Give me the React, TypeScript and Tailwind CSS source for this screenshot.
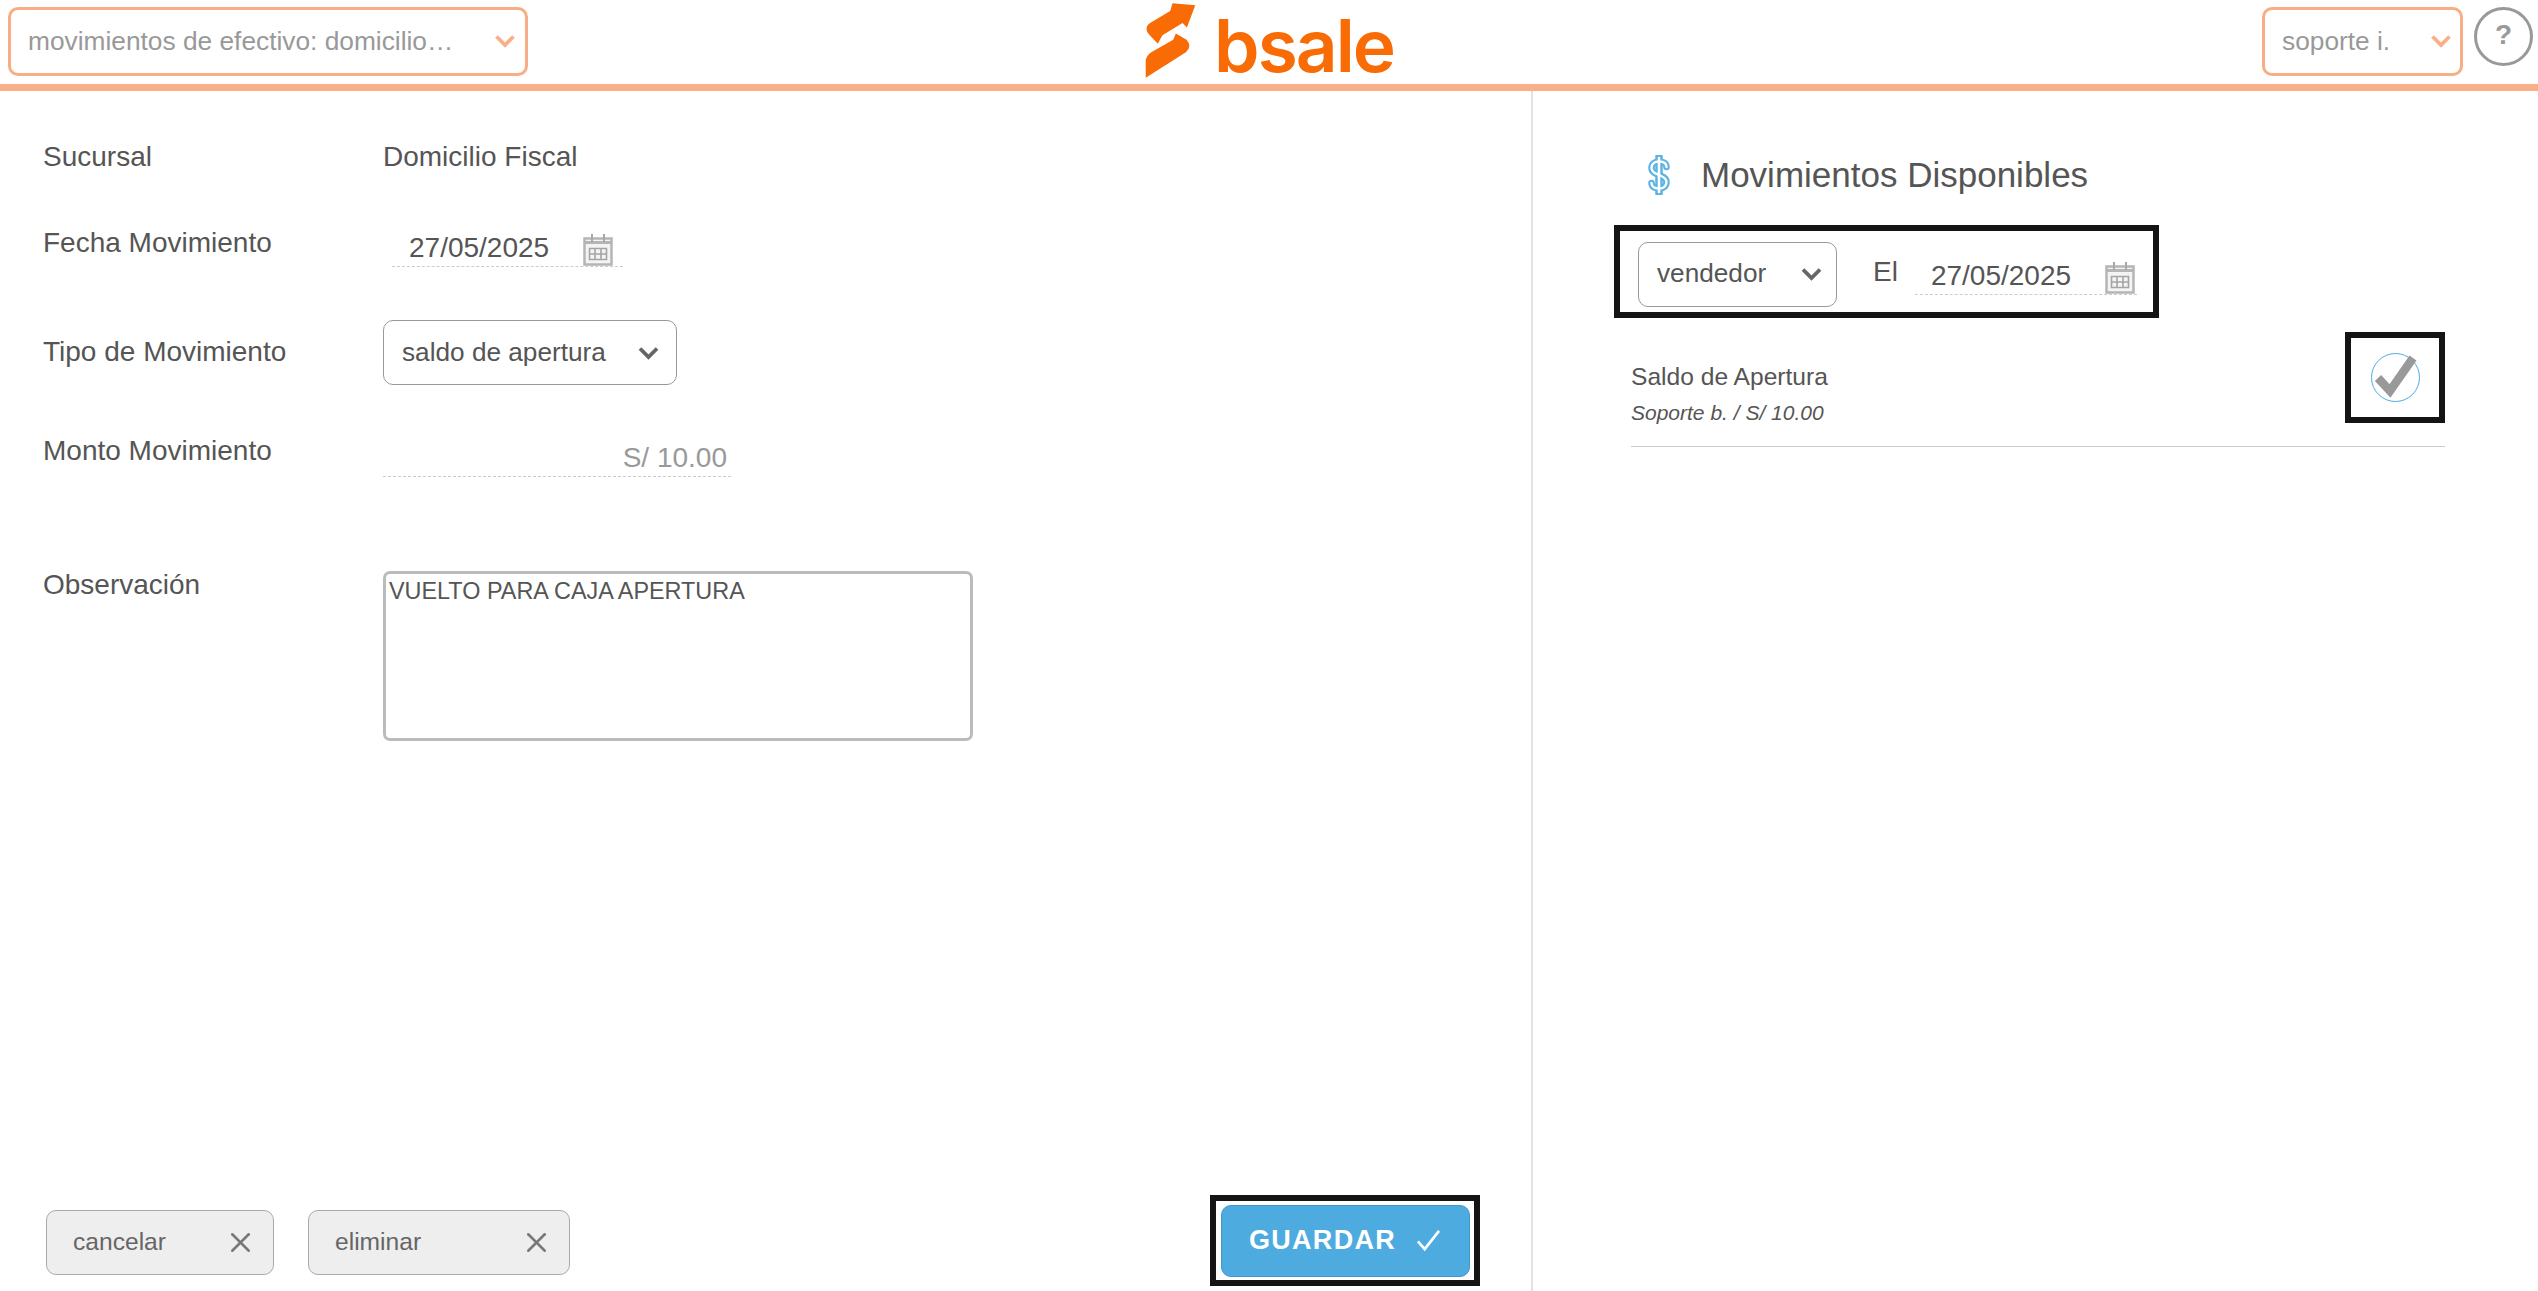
import { X } from "lucide-react"

const Chevron = ({ color = "#666", className = "" }: { color?: string; className?: string }) => (
  <svg viewBox="0 0 20 14" className={className} fill="none">
    <path d="M1.5 2.5 L10 11 L18.5 2.5" stroke={color} strokeWidth="3.8" />
  </svg>
)

const CalendarIcon = ({ className = "" }: { className?: string }) => (
  <svg viewBox="0 0 30 33" className={className} fill="none" stroke="#b5b5b5">
    <rect x="1.5" y="5.5" width="27" height="26" strokeWidth="2.5" fill="#f4f4f4" />
    <path d="M1.5 9.5 H28.5" strokeWidth="3" />
    <path d="M9 1 V9 M21 1 V9" strokeWidth="2" stroke="#a8a8a8" />
    <path d="M6.5 15.5 H23.5 V26.5 H6.5 Z M6.5 21 H23.5 M12 15.5 V26.5 M18 15.5 V26.5" strokeWidth="1.6" stroke="#a5a5a5" />
  </svg>
)

const DOLLAR_S =
  "M18.5 12 C18.5 8 15 6.5 11 6.5 C6.5 6.5 3.5 9 3.5 13 C3.5 17 7 18.5 11 20 C15 21.5 18.5 23 18.5 27 C18.5 31 15.5 33.5 11 33.5 C7 33.5 3.5 32 3.5 28"

const DollarIcon = () => (
  <svg viewBox="0 0 22 40" className="w-[24px] h-[40px] shrink-0" fill="none">
    <path d="M11 1.5 V38.5" stroke="#5cb2e3" strokeWidth="7.5" strokeLinecap="round" />
    <path d={DOLLAR_S} stroke="#5cb2e3" strokeWidth="6.5" strokeLinecap="round" />
    <path d="M11 3 V37" stroke="#ffffff" strokeWidth="2.6" strokeLinecap="round" />
    <path d={DOLLAR_S} stroke="#ffffff" strokeWidth="2.4" strokeLinecap="round" />
  </svg>
)

const LogoMark = () => (
  <svg viewBox="140 5 155 230" className="w-[52px] h-[77px] shrink-0" fill="#f96b04">
    <path d="M155 68 L215 32 L222 9 L290 15 L265 81 L252 68 L192 104 L178 130 L152 102 Q135 82 155 68 Z" />
    <path d="M232 99 L264 118 Q282 138 262 155 L142 231 L142 178 Q146 162 160 154 L224 118 Z" />
  </svg>
)

function TopSelect({ label, className }: { label: string; className: string }) {
  return (
    <div className={`h-[69px] flex items-center justify-between border-[3px] border-[#f8ae85] rounded-[10px] bg-white ${className}`}>
      <span className="text-[26.3px] text-[#999] whitespace-nowrap">{label}</span>
      <Chevron color="#f9b088" className="w-[20px] h-[14px] mt-[-2px]" />
    </div>
  )
}

function FormSelect({ label, className }: { label: string; className: string }) {
  return (
    <div className={`h-[65px] flex items-center justify-between border border-[#999] rounded-[10px] bg-white ${className}`}>
      <span className="text-[26.2px] text-[#555] whitespace-nowrap">{label}</span>
      <Chevron className="w-[21px] h-[14px]" />
    </div>
  )
}

function DateField({ className }: { className: string }) {
  return (
    <div className={`h-[48px] flex items-end justify-between border-b border-dashed border-[#ccc] ${className}`}>
      <span className="text-[28px] leading-[36px] text-[#555]">27/05/2025</span>
      <CalendarIcon className="w-[30px] h-[33px]" />
    </div>
  )
}

function ActionButton({ label, className }: { label: string; className: string }) {
  return (
    <div className={`h-[65px] mb-[11px] flex items-center justify-between bg-[#eee] border-[1.5px] border-[#aaa] rounded-[10px] pl-[26px] pr-[16px] ${className}`}>
      <span className="text-[24.6px] text-[#666]">{label}</span>
      <X className="w-[33px] h-[33px] text-[#777]" strokeWidth={1.8} />
    </div>
  )
}

export default function App() {
  return (
    <div className="h-screen w-full flex flex-col overflow-hidden bg-white font-['Liberation_Sans',Arial,sans-serif]">
      {/* Top bar */}
      <header className="h-[91px] shrink-0 border-b-[7px] border-[#f9b088] grid grid-cols-[1fr_auto_1fr] items-start pt-[7px]">
        <TopSelect label="movimientos de efectivo: domicilio…" className="w-[520px] ml-[8px] pl-[17px] pr-[10px]" />
        <div className="flex items-end gap-[17px] mt-[-5px] ml-[1px]">
          <LogoMark />
          <span className="font-['Inter',sans-serif] font-semibold text-[73px] leading-[73px] tracking-[-2px] text-[#f96b04] mb-[-3px]">bsale</span>
        </div>
        <div className="flex justify-end gap-[11px] pr-[5px]">
          <TopSelect label="soporte i." className="w-[201px] pl-[17px] pr-[9px]" />
          <div className="w-[59px] h-[59px] rounded-full border-[3px] border-[#999] flex items-center justify-center text-[#999] text-[28px] font-bold pb-[4px]">?</div>
        </div>
      </header>

      <div className="flex flex-1 min-h-0">
        {/* Left form */}
        <section className="w-[1533px] shrink-0 flex flex-col pl-[43px] border-r-2 border-[#e2e2e2] text-[#555] text-[28px]">
          <div className="mt-[40px] h-[52px] flex items-center">
            <label className="w-[340px]">Sucursal</label>
            <span>Domicilio Fiscal</span>
          </div>
          <div className="mt-[34px] h-[52px] flex items-start">
            <label className="w-[340px] leading-[52px]">Fecha Movimiento</label>
            <DateField className="w-[231px] ml-[9px] mt-[2px] pl-[17px] pr-[10px]" />
          </div>
          <div className="mt-[51px] h-[65px] flex items-center">
            <label className="w-[340px] mt-[-2px]">Tipo de Movimiento</label>
            <FormSelect label="saldo de apertura" className="w-[294px] pl-[18px] pr-[17px]" />
          </div>
          <div className="mt-[40px] h-[52px] flex items-center">
            <label className="w-[340px]">Monto Movimiento</label>
            <div className="w-[348px] h-[52px] flex items-end justify-end border-b border-dashed border-[#ccc] pr-[4px] text-[28px] leading-[36px] text-[#999]">S/ 10.00</div>
          </div>
          <div className="mt-[94px] flex items-start">
            <label className="w-[340px] mt-[-7px]">Observación</label>
            <div className="w-[590px] h-[170px] border-[3px] border-[#bbb] rounded-[7px] px-[3px] py-[2px] text-[23.4px] leading-[30px] text-[#555]">VUELTO PARA CAJA APERTURA</div>
          </div>

          <div className="mt-auto flex items-end pb-[5px]">
            <ActionButton label="cancelar" className="w-[228px] ml-[3px]" />
            <ActionButton label="eliminar" className="w-[262px] ml-[34px]" />
            <div className="ml-auto mr-[51px] w-[270px] h-[91px] border-[6px] border-[#141414] flex items-center justify-center">
              <div className="w-[249px] h-[72px] bg-[#4eabe0] border border-[#3f97cc] rounded-[10px] flex items-center justify-center gap-[20px] text-white">
                <span className="text-[27px] font-bold tracking-[1.3px]">GUARDAR</span>
                <svg viewBox="0 0 26 24" className="w-[25px] h-[23px]" fill="none">
                  <path d="M2 13 L9 21 L24 2" stroke="#ffffff" strokeWidth="2.8" />
                </svg>
              </div>
            </div>
          </div>
        </section>

        {/* Right list */}
        <section className="flex-1 text-[#555]">
          <div className="mt-[58px] h-[52px] ml-[114px] flex items-center gap-[30px]">
            <DollarIcon />
            <h2 className="text-[35px] font-normal">Movimientos Disponibles</h2>
          </div>
          <div className="mt-[24px] ml-[81px] w-[545px] h-[93px] border-[6px] border-[#141414] flex items-center pl-[18px]">
            <FormSelect label="vendedor" className="w-[199px] mt-[5px] pl-[18px] pr-[14px]" />
            <span className="ml-[36px] text-[28px] mt-[1px]">El</span>
            <DateField className="w-[222px] ml-[17px] mt-[-2px] pl-[16px] pr-[2px]" />
          </div>
          <div className="mt-[14px] ml-[98px] w-[814px] h-[115px] border-b border-[#ccc] flex items-start justify-between">
            <div className="pt-[30px]">
              <div className="text-[24.6px] leading-[30px]">Saldo de Apertura</div>
              <div className="text-[21px] leading-[24px] italic mt-[9px]">Soporte b. / S/ 10.00</div>
            </div>
            <div className="w-[100px] h-[91px] border-[6px] border-[#141414] flex items-center justify-center">
              <div className="w-[49px] h-[49px] rounded-full border-[1.5px] border-[#4eabe0] flex items-center justify-center">
                <svg viewBox="0 0 44 44" className="w-[44px] h-[44px] overflow-visible blur-[0.6px]" fill="none">
                  <path d="M5 22 L17 35 L40 2" stroke="#999999" strokeWidth="8.5" />
                </svg>
              </div>
            </div>
          </div>
        </section>
      </div>
    </div>
  )
}
